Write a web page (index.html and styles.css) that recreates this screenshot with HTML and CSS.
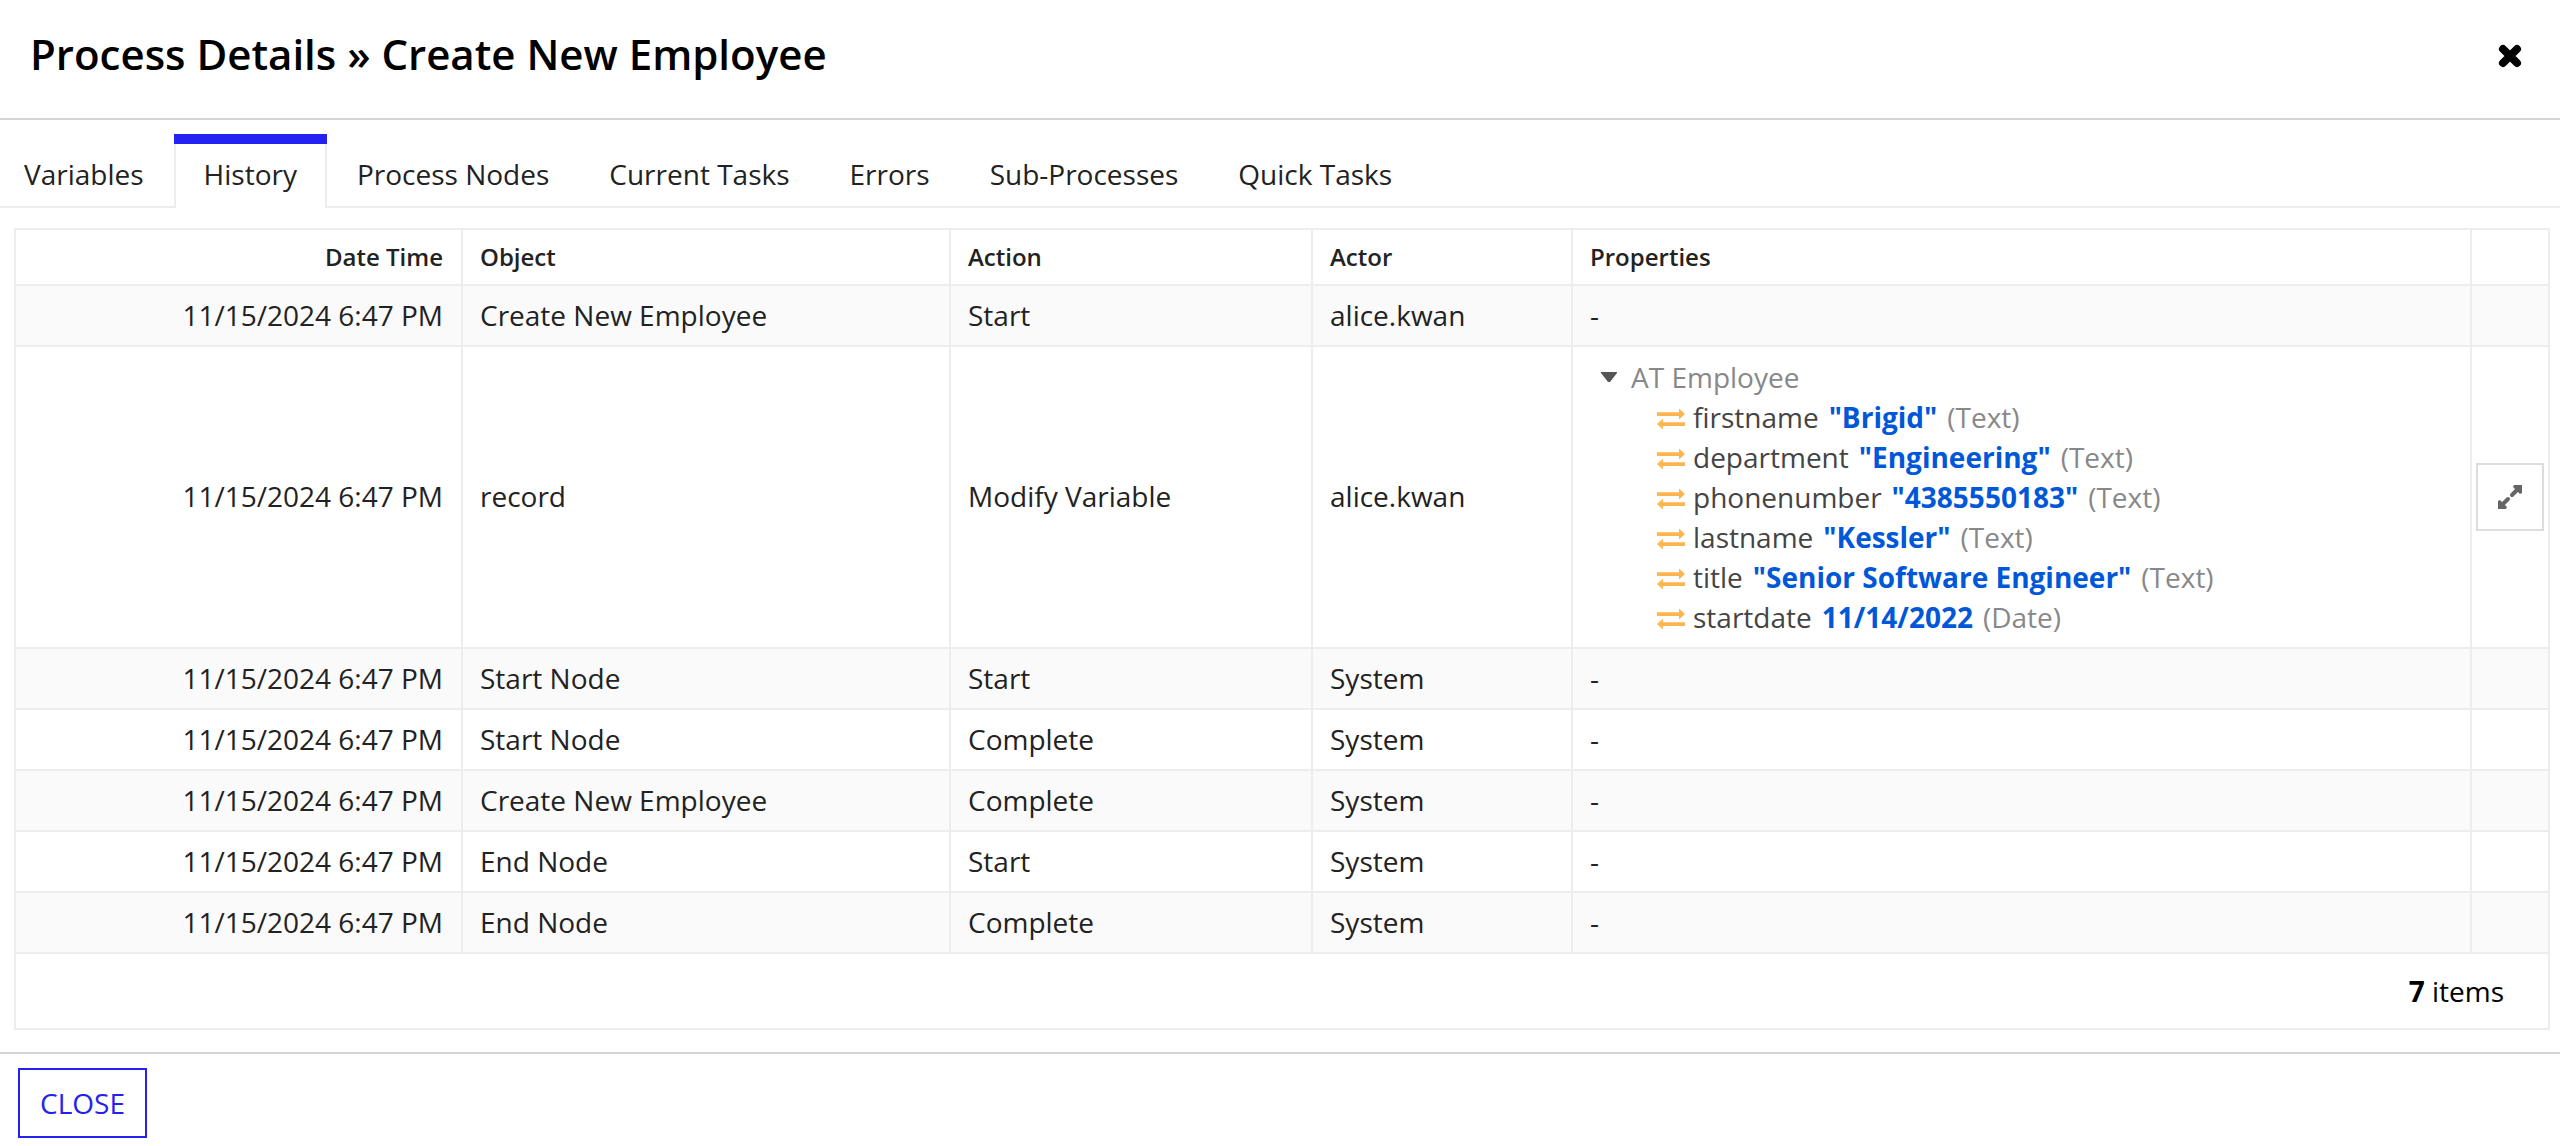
FILE: index.html
```html
<!DOCTYPE html>
<html lang="en">
<head>
<meta charset="utf-8">
<title>Process Details » Create New Employee</title>
<link rel="stylesheet" href="styles.css">
</head>
<body>
<svg class="sprite" aria-hidden="true">
  <symbol id="swap" viewBox="0 0 28 28">
    <path d="M0 9.300h22V5.500l6 5.500-6 5.500V13H0zM28 23H6v3.500L0 21l6-5.300v3.600h22z"/>
  </symbol>
</svg>
<main class="dialog">
  <header class="dialog-header">
    <h1 class="dialog-title">Process Details » Create New Employee</h1>
    <button class="icon-close" type="button" aria-label="Close dialog">
      <svg viewBox="0 0 24 24" width="24" height="24" aria-hidden="true"><path d="M5 5l14 14M19 5L5 19" stroke="currentColor" stroke-width="8" stroke-linecap="round"/></svg>
    </button>
  </header>
  <nav class="tabs" aria-label="Process details">
    <a class="tab" href="#variables">Variables</a>
    <a class="tab tab-active" href="#history" aria-current="page">History</a>
    <a class="tab" href="#nodes">Process Nodes</a>
    <a class="tab" href="#tasks">Current Tasks</a>
    <a class="tab" href="#errors">Errors</a>
    <a class="tab" href="#subprocesses">Sub-Processes</a>
    <a class="tab" href="#quick">Quick Tasks</a>
  </nav>
  <section class="grid">
    <table class="history">
      <colgroup>
        <col class="col-date"><col class="col-object"><col class="col-action"><col class="col-actor"><col><col class="col-expand">
      </colgroup>
      <thead>
        <tr><th class="date" scope="col">Date Time</th><th scope="col">Object</th><th scope="col">Action</th><th scope="col">Actor</th><th scope="col">Properties</th><td></td></tr>
      </thead>
      <tbody>
        <tr><td class="date">11/15/2024 6:47 PM</td><td>Create New Employee</td><td>Start</td><td>alice.kwan</td><td>-</td><td></td></tr>
        <tr>
          <td class="date">11/15/2024 6:47 PM</td><td>record</td><td>Modify Variable</td><td>alice.kwan</td>
          <td class="properties">
            <details class="tree" open>
              <summary class="tree-root"><svg class="caret" viewBox="0 0 16 10" aria-hidden="true"><path d="M0 0h16v1L9 10H7L0 1z"/></svg>AT Employee</summary>
              <ul class="tree-items">
                <li><svg class="swap" aria-hidden="true"><use href="#swap"/></svg>firstname <strong>"Brigid"</strong> <span class="type">(Text)</span></li>
                <li><svg class="swap" aria-hidden="true"><use href="#swap"/></svg>department <strong>"Engineering"</strong> <span class="type">(Text)</span></li>
                <li><svg class="swap" aria-hidden="true"><use href="#swap"/></svg>phonenumber <strong>"4385550183"</strong> <span class="type">(Text)</span></li>
                <li><svg class="swap" aria-hidden="true"><use href="#swap"/></svg>lastname <strong>"Kessler"</strong> <span class="type">(Text)</span></li>
                <li><svg class="swap" aria-hidden="true"><use href="#swap"/></svg>title <strong>"Senior Software Engineer"</strong> <span class="type">(Text)</span></li>
                <li><svg class="swap" aria-hidden="true"><use href="#swap"/></svg>startdate <strong>11/14/2022</strong> <span class="type">(Date)</span></li>
              </ul>
            </details>
          </td>
          <td class="expand-cell">
            <button class="expand" type="button" aria-label="Expand properties">
              <svg viewBox="0 0 24 24" width="24" height="24" aria-hidden="true"><path d="M16 0h8v8l-2 1-7-7zM8 24H0v-8l2-1 7 7z"/><path d="M14 10l5-5M5 19l5-5" stroke="#666" stroke-width="4" stroke-linecap="round"/></svg>
            </button>
          </td>
        </tr>
        <tr><td class="date">11/15/2024 6:47 PM</td><td>Start Node</td><td>Start</td><td>System</td><td>-</td><td></td></tr>
        <tr><td class="date">11/15/2024 6:47 PM</td><td>Start Node</td><td>Complete</td><td>System</td><td>-</td><td></td></tr>
        <tr><td class="date">11/15/2024 6:47 PM</td><td>Create New Employee</td><td>Complete</td><td>System</td><td>-</td><td></td></tr>
        <tr><td class="date">11/15/2024 6:47 PM</td><td>End Node</td><td>Start</td><td>System</td><td>-</td><td></td></tr>
        <tr><td class="date">11/15/2024 6:47 PM</td><td>End Node</td><td>Complete</td><td>System</td><td>-</td><td></td></tr>
      </tbody>
    </table>
    <p class="count"><strong>7</strong> items</p>
  </section>
  <footer class="dialog-footer">
    <button class="button" type="button">CLOSE</button>
  </footer>
</main>
</body>
</html>
```
FILE: styles.css
```css
* { box-sizing: border-box; }

body {
  margin: 0;
  background: #fff;
  color: #222;
  font-family: "Open Sans", "Noto Sans", sans-serif;
  font-size: 28px;
  line-height: 40px;
}

.sprite { display: none; }

.dialog-header {
  display: flex;
  align-items: center;
  justify-content: space-between;
  padding: 26px 38px 32px 30px;
  border-bottom: 2px solid #d4d4d4;
  color: #000;
}

.dialog-title {
  margin: 0;
  padding-bottom: 4px;
  font-size: 42px;
  font-weight: 600;
  line-height: 56px;
}

.icon-close {
  display: flex;
  padding: 0;
  border: 0;
  background: none;
  color: #000;
}

.tabs {
  display: flex;
  padding-top: 14px;
  box-shadow: inset 0 -2px #ededed;
}

.tab {
  padding: 10px 30px 14px;
  border-top: 10px solid transparent;
  color: #222;
  text-decoration: none;
}

.tab:first-child { padding-left: 24px; }

.tab-active {
  border-color: #2322f0;
  background: #fff;
  box-shadow: inset 2px 0 #ededed, inset -2px 0 #ededed;
}

.grid {
  margin: 20px 10px 22px 14px;
  border: 2px solid #ededed;
}

.history {
  width: 100%;
  table-layout: fixed;
  border-collapse: separate;
  border-spacing: 0;
}

.col-date { width: 447px; }
.col-object { width: 488px; }
.col-action { width: 362px; }
.col-actor { width: 260px; }
.col-expand { width: 76px; }

.history th,
.history td {
  height: 61px;
  padding: 0 18px 2px 17px;
  border: solid #ededed;
  border-width: 0 2px 2px 0;
  text-align: left;
}

.history thead th,
.history thead td {
  height: 56px;
  padding-bottom: 0;
  font-size: 24px;
  font-weight: 600;
}

.history tr > :last-child { border-right: 0; }
.history tbody tr:nth-child(odd) { background: #fafafa; }
.history .date { text-align: right; }
.history .properties { padding: 10px 28px; }
.history .expand-cell { padding: 0 4px; }

.tree-root {
  display: flex;
  align-items: center;
  gap: 14px;
  color: #888;
}

.caret {
  width: 16px;
  height: 10px;
  fill: #555;
}

.tree-items {
  margin: 0;
  padding: 0 0 0 56px;
  color: #444;
  list-style: none;
}

.tree-items li {
  display: flex;
  align-items: center;
  gap: 8px;
}

.tree-items strong {
  padding: 0 2px;
  color: #0057d8;
}

.type { color: #888; }

.swap {
  width: 28px;
  height: 28px;
  fill: #ffb452;
}

.expand {
  display: flex;
  align-items: center;
  justify-content: center;
  width: 68px;
  height: 68px;
  padding: 0;
  border: 2px solid #ddd;
  background: #fff;
  fill: #666;
}

.count {
  margin: 0;
  padding: 17px 44px 17px;
  color: #000;
  text-align: right;
}

.dialog-footer {
  padding: 14px 18px 8px;
  border-top: 2px solid #d4d4d4;
}

.button {
  height: 70px;
  padding: 0 20px;
  border: 2px solid #2322f0;
  background: #fff;
  color: #2322f0;
  font: 500 28px "Open Sans", "Noto Sans", sans-serif;
}
```
